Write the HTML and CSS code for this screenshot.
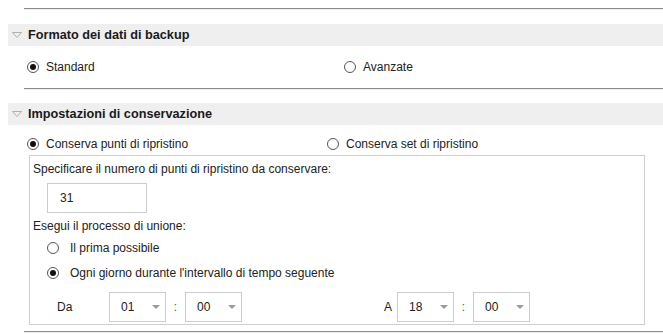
FILE: index.html
```html
<!DOCTYPE html>
<html lang="it">
<head>
<meta charset="utf-8">
<title>Backup</title>
<link rel="stylesheet" href="styles.css">
</head>
<body>
<div class="page">
  <div class="rule rule-top"></div>

  <div class="hdr hdr-1">
    <svg class="tri" width="10" height="6" viewBox="0 0 10 6"><path d="M0.5 0.5 H9.5 L5 5.5 Z" fill="none" stroke="#b0b0b0" stroke-width="1"/></svg>
    <span class="hdr-text">Formato dei dati di backup</span>
  </div>
  <div class="opts opts-fmt">
    <div class="opt opt-first"><span class="radio on"></span><span>Standard</span></div>
    <div class="opt"><span class="radio"></span><span>Avanzate</span></div>
  </div>

  <div class="rule rule-mid"></div>

  <div class="hdr hdr-2">
    <svg class="tri" width="10" height="6" viewBox="0 0 10 6"><path d="M0.5 0.5 H9.5 L5 5.5 Z" fill="none" stroke="#b0b0b0" stroke-width="1"/></svg>
    <span class="hdr-text">Impostazioni di conservazione</span>
  </div>
  <div class="opts opts-ret">
    <div class="opt opt-first"><span class="radio on"></span><span>Conserva punti di ripristino</span></div>
    <div class="opt"><span class="radio"></span><span>Conserva set di ripristino</span></div>
  </div>

  <div class="box">
    <div class="line l-spec">Specificare il numero di punti di ripristino da conservare:</div>
    <div class="input">31</div>
    <div class="line l-merge">Esegui il processo di unione:</div>
    <div class="opt sub sub-1"><span class="radio"></span><span>Il prima possibile</span></div>
    <div class="opt sub sub-2"><span class="radio on"></span><span>Ogni giorno durante l'intervallo di tempo seguente</span></div>
    <div class="time-row">
      <span class="time-lbl">Da</span>
      <div class="sel"><span>01</span><span class="arrow"></span></div>
      <span class="colon">:</span>
      <div class="sel"><span>00</span><span class="arrow"></span></div>
      <span class="time-lbl-a">A</span>
      <div class="sel"><span>18</span><span class="arrow"></span></div>
      <span class="colon">:</span>
      <div class="sel"><span>00</span><span class="arrow"></span></div>
    </div>
  </div>

  <div class="rule rule-bot"></div>
</div>
</body>
</html>
```

FILE: styles.css
```css
html, body {
  margin: 0;
  padding: 0;
  background: #ffffff;
}
body {
  width: 663px;
  height: 334px;
  overflow: hidden;
  font-family: "Liberation Sans", Arial, sans-serif;
  font-size: 12px;
  color: #222222;
}
.page {
  display: flex;
  flex-direction: column;
  padding-top: 8px;
}
.rule {
  margin-left: 24px;
  height: 1px;
  background: #8c8c8c;
  border-bottom: 1px solid #ececec;
}
.hdr {
  margin-left: 8px;
  height: 22px;
  background: #efefef;
  display: flex;
  align-items: center;
}
.hdr-1 { margin-top: 14px; }
.hdr-2 { margin-top: 13px; }
.tri {
  margin-left: 4px;
  margin-top: -1px;
  flex: none;
}
.hdr-text {
  margin-left: 6px;
  font-weight: bold;
  font-size: 12.7px;
  color: #1a1a1a;
}
.opts {
  display: flex;
  align-items: center;
  padding-left: 27px;
}
.opts-fmt {
  height: 22px;
  margin-top: 10px;
  margin-bottom: 10px;
}
.opts-fmt .opt-first { width: 317px; }
.opts-ret {
  height: 18px;
  margin-top: 10px;
}
.opts-ret .opt-first { width: 300px; }
.opt {
  display: flex;
  align-items: center;
  gap: 7px;
}
.radio {
  width: 12px;
  height: 12px;
  box-sizing: border-box;
  border: 1px solid #555555;
  border-radius: 50%;
  background: #ffffff;
  display: flex;
  align-items: center;
  justify-content: center;
  flex: none;
}
.radio.on::after {
  content: "";
  width: 6px;
  height: 6px;
  border-radius: 50%;
  background: #111111;
}
.box {
  margin: 2px 18px 0 29px;
  border: 1px solid #cfcfcf;
  padding: 0 0 2px 0;
  display: flex;
  flex-direction: column;
}
.line {
  line-height: 16px;
  padding-left: 3px;
}
.l-spec { margin-top: 5px; }
.l-merge { margin-top: 5px; }
.input {
  margin: 6px 0 0 17px;
  width: 100px;
  height: 30px;
  box-sizing: border-box;
  border: 1px solid #cccccc;
  padding-left: 12px;
  display: flex;
  align-items: center;
}
.sub {
  height: 16px;
  margin-left: 17px;
  gap: 11px;
}
.sub-1 { margin-top: 6px; }
.sub-2 { margin-top: 9px; }
.time-row {
  margin-top: 11px;
  display: flex;
  align-items: center;
  height: 30px;
  padding-left: 27px;
}
.time-lbl { width: 52px; }
.time-lbl-a { margin-left: 142px; width: 13px; }
.sel {
  width: 57px;
  height: 30px;
  box-sizing: border-box;
  border: 1px solid #cccccc;
  padding: 0 5px 0 11px;
  display: flex;
  align-items: center;
  justify-content: space-between;
}
.arrow {
  width: 0;
  height: 0;
  border-left: 4px solid transparent;
  border-right: 4px solid transparent;
  border-top: 4px solid #9a9a9a;
}
.colon {
  width: 19px;
  text-align: center;
  color: #555555;
}
.rule-bot { margin-top: 6px; }
```
